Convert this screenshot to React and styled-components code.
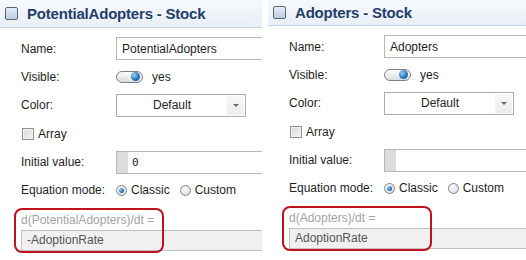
import React from 'react'
import styled, { createGlobalStyle } from 'styled-components'

const Global = createGlobalStyle`
body {
  margin: 0;
  background: #fff;
  font-family: "Liberation Sans", Arial, sans-serif;
  font-size: 12px;
  color: #1e1e1e;
}
`

const Page = styled.div`
display: flex;
gap: 6px;
width: 526px;
height: 260px;
overflow: hidden;
background: #fff;
`

const Panel = styled.div`
flex: ${props => props.$grow ? 1 : 'none'};
width: ${props => props.$grow ? 'auto' : '262px'};
min-width: 0;
overflow: hidden;
`

const Header = styled.div`
height: ${props => props.$h}px;
display: flex;
align-items: center;
gap: 9px;
padding-left: 5px;
background: linear-gradient(#f7f9fc, #e9eff6);
border-bottom: 1px solid #bcd3ea;
`

const HeaderBox = styled.div`
width: 11px;
height: 11px;
border: 1px solid #5d6670;
border-radius: 2px;
background: linear-gradient(#e6eef7, #b9cde2);
`

const Title = styled.div`
font-size: 15px;
font-weight: bold;
color: #1f3e6a;
white-space: nowrap;
letter-spacing: -0.2px;
`

const Body = styled.div`
padding: 9px 0 0 21px;
`

const Form = styled.div`
display: grid;
grid-template-columns: 95px 1fr;
grid-auto-rows: 23px;
row-gap: 5.4px;
align-items: center;
`

const Label = styled.div`
white-space: nowrap;
`

const TextField = styled.div`
height: 23px;
box-sizing: border-box;
border: 1px solid #b5b7bb;
border-right: none;
margin-right: -40px;
display: flex;
align-items: center;
padding-left: 5px;
background: #fff;
white-space: nowrap;
`

const Inline = styled.div`
display: flex;
align-items: center;
gap: ${props => props.$gap || 5}px;
white-space: nowrap;
`

const Track = styled.div`
width: 23px;
height: 10px;
border: 1px solid #7e8389;
border-radius: 6px;
background: linear-gradient(#fdfdfd, #dcdcdc);
display: flex;
align-items: center;
justify-content: flex-end;
padding-right: 2px;
margin-right: 4px;
`

const Knob = styled.div`
width: 9px;
height: 9px;
border-radius: 50%;
background: radial-gradient(circle at 35% 35%, #9fd0f5, #1e6fb8 60%, #0d4c8a);
`

const Select = styled.div`
width: 130px;
height: 23px;
box-sizing: border-box;
border: 1px solid #a9abaf;
display: flex;
align-items: center;
background: #fff;
`

const SelectText = styled.div`
flex: 1;
text-align: center;
`

const SelectButton = styled.div`
width: 17px;
height: 19px;
margin-right: 1px;
background: linear-gradient(#f7f7f7, #ececec);
display: flex;
align-items: center;
justify-content: center;
&:after {
  content: "";
  border-left: 3px solid transparent;
  border-right: 3px solid transparent;
  border-top: 3px solid #666;
}
`

const Check = styled.div`
width: 10px;
height: 10px;
border: 1px solid #8e8f8f;
background: linear-gradient(135deg, #d8d8d8, #f4f4f4);
box-shadow: inset 0 0 0 1px #f4f4f4;
margin-left: 1px;
`

const ArrayRow = styled(Inline)`
grid-column: 1 / span 2;
gap: 4px;
`

const InitialField = styled(TextField)`
padding-left: 0;
font-family: "DejaVu Sans Mono", "Liberation Mono", monospace;
font-size: 11px;
`

const Gutter = styled.div`
width: 11px;
align-self: stretch;
background: #dcdcdc;
margin-right: 4px;
`

const Radio = styled.div`
width: 11px;
height: 11px;
box-sizing: border-box;
border-radius: 50%;
border: 1px solid #80868c;
background: radial-gradient(circle at 40% 35%, #ffffff, #d3d3d3);
display: flex;
align-items: center;
justify-content: center;
&:after {
  content: "";
  display: ${props => props.$on ? 'block' : 'none'};
  width: 5px;
  height: 5px;
  border-radius: 50%;
  background: radial-gradient(circle at 35% 35%, #8cc8f2, #1565b0 70%);
}
`

const RadioLabel = styled.span`
margin-right: 6px;
`

const Equation = styled.div`
position: relative;
margin-top: 11px;
`

const EqLabel = styled.div`
height: 14px;
line-height: 14px;
color: #a3a3a3;
white-space: nowrap;
`

const EqField = styled.div`
margin-top: 3px;
height: 21px;
box-sizing: border-box;
border: 1px solid #c2c2c2;
border-right: none;
background: #f0f0f0;
color: #555;
display: flex;
align-items: center;
padding-left: 5px;
margin-right: -40px;
white-space: nowrap;
`

const Highlight = styled.div`
position: absolute;
left: -7px;
top: -5px;
width: 150px;
height: 45px;
box-sizing: border-box;
border: 2px solid #c0121c;
border-radius: 8px;
pointer-events: none;
`

const StockPanel = ({ name, initial, rate, headerH, grow }) => (
  <Panel $grow={grow}>
    <Header $h={headerH}>
      <HeaderBox />
      <Title>{name} - Stock</Title>
    </Header>
    <Body>
      <Form>
        <Label>Name:</Label>
        <TextField>{name}</TextField>
        <Label>Visible:</Label>
        <Inline $gap={0}>
          <Track><Knob /></Track>
          yes
        </Inline>
        <Label>Color:</Label>
        <Select>
          <SelectText>Default</SelectText>
          <SelectButton />
        </Select>
        <ArrayRow>
          <Check />
          Array
        </ArrayRow>
        <Label>Initial value:</Label>
        <InitialField>
          <Gutter />
          {initial}
        </InitialField>
        <Label>Equation mode:</Label>
        <Inline $gap={4}>
          <Radio $on />
          <RadioLabel>Classic</RadioLabel>
          <Radio />
          <RadioLabel>Custom</RadioLabel>
        </Inline>
      </Form>
      <Equation>
        <EqLabel>d({name})/dt =</EqLabel>
        <EqField>{rate}</EqField>
        <Highlight />
      </Equation>
    </Body>
  </Panel>
)

export default function App() {
  return (
    <>
      <Global />
      <Page>
        <StockPanel name="PotentialAdopters" initial="0" rate="-AdoptionRate" headerH={27} />
        <StockPanel name="Adopters" initial="" rate="AdoptionRate" headerH={25} grow />
      </Page>
    </>
  )
}
